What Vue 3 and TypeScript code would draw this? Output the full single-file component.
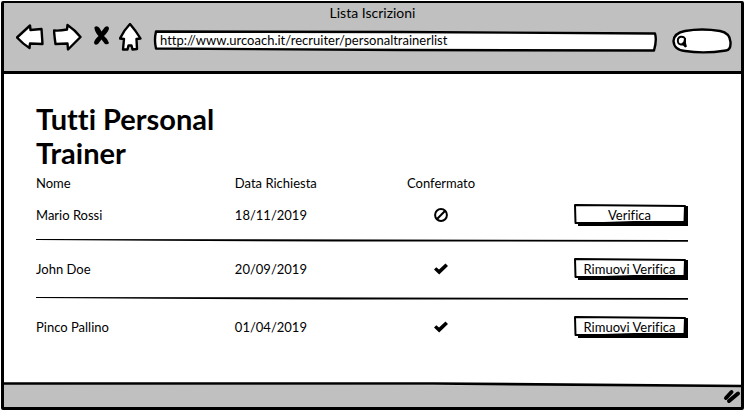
<script setup lang="ts">
import { ref } from 'vue'

interface Trainer {
  name: string
  date: string
  confirmed: boolean
}

const url = ref('http://www.urcoach.it/recruiter/personaltrainerlist')
const search = ref('')
const trainers = ref<Trainer[]>([
  { name: 'Mario Rossi', date: '18/11/2019', confirmed: false },
  { name: 'John Doe', date: '20/09/2019', confirmed: true },
  { name: 'Pinco Pallino', date: '01/04/2019', confirmed: true },
])

function toggle(trainer: Trainer) {
  trainer.confirmed = !trainer.confirmed
}
</script>

<template>
  <div class="window">
    <header class="chrome">
      <div class="title">Lista Iscrizioni</div>
      <div class="toolbar">
        <nav class="nav" aria-label="Browser">
          <button type="button" aria-label="Indietro">
            <svg width="28" height="28" viewBox="0 0 28 28" class="outline">
              <path d="M1 14.5 L14 2.5 L14.5 7 L25.500 6 L26.5 21 L14 20.5 L13.5 25 Q7 21 1 14.5 Z" />
            </svg>
          </button>
          <button type="button" aria-label="Avanti">
            <svg width="30" height="28" viewBox="0 0 30 28" class="outline">
              <path d="M1 7.5 Q7 8 14 6.5 L14.5 2 Q22 7 27.5 14 L15 26.5 L14.5 20.5 L2.5 21 Q1.5 14 1 7.5 Z" />
            </svg>
          </button>
          <button type="button" aria-label="Interrompi">
            <svg width="18" height="28" viewBox="0 0 18 28">
              <path d="M2.500 4 Q5 2 7.500 5 L9.500 8.500 L13 4 Q16 2 17 5 Q17 8 12 13 Q16 16 17 20 Q16 22 13 21 L9.500 16.500 L6 21 Q3 23 2 20 Q2 17 6.500 13 Q2 8 2.500 4 Z" />
            </svg>
          </button>
          <button type="button" aria-label="Pagina iniziale">
            <svg width="24" height="28" viewBox="0 0 24 28" class="outline">
              <path d="M11 1 Q17 8 21.500 15.500 L17.500 16 L18 26 L13.500 26.500 L12.500 22.500 L9.500 22.500 L8.500 26.500 L4 26.500 L5 16 L1 15.500 Q5 7 11 1 Z" />
            </svg>
          </button>
        </nav>
        <div class="address">
          <svg class="sketch" viewBox="0 0 506 22" preserveAspectRatio="none" aria-hidden="true">
            <path d="M3 1.500 L250 2 L503 3.500 Q505 10 502 20.500 L250 20 L3 18.500 Q1 10 3 1.500 Z" />
          </svg>
          <input v-model="url" type="text" aria-label="Indirizzo" />
        </div>
        <div class="search">
          <svg class="sketch" viewBox="0 0 60 26" preserveAspectRatio="none" aria-hidden="true">
            <path d="M13 3 Q30 0 48 3 Q58 5 58.500 14 Q59 22 54 22.500 Q32 26 13 23 Q2 22 1.500 13 Q2 5 13 3 Z" />
          </svg>
          <svg class="lens" width="12" height="14" viewBox="0 0 12 14" aria-hidden="true">
            <path d="M9 3 Q4 0 2 4 Q1 9 5 9.500 Q9 9 9 3 Q8.500 8 10 12 M6 8 L10 12" />
          </svg>
          <input v-model="search" type="text" aria-label="Cerca" />
        </div>
      </div>
    </header>

    <main class="page">
      <h1>Tutti Personal Trainer</h1>
      <table>
        <colgroup>
          <col class="col-name" />
          <col class="col-date" />
          <col class="col-state" />
          <col />
        </colgroup>
        <thead>
          <tr>
            <th scope="col">Nome</th>
            <th scope="col">Data Richiesta</th>
            <th scope="col" class="state">Confermato</th>
            <td></td>
          </tr>
        </thead>
        <tbody>
          <template v-for="(trainer, index) in trainers" :key="trainer.name">
            <tr v-if="index > 0" class="divider">
              <td colspan="4">
                <svg viewBox="0 0 652 4" preserveAspectRatio="none" aria-hidden="true">
                  <path d="M0 1 L652 2 L652 3.800 L300 3.400 L120 2.800 L0 2 Z" />
                </svg>
              </td>
            </tr>
            <tr class="trainer">
              <td>{{ trainer.name }}</td>
              <td>{{ trainer.date }}</td>
              <td class="state">
                <svg v-if="trainer.confirmed" width="14" height="12" viewBox="0 0 14 12" role="img" aria-label="Confermato">
                  <path d="M0 6.500 L2.300 4.200 L5 6.500 L11.500 0.500 L14 3 L5.200 11.600 Z" />
                </svg>
                <svg v-else class="banned" width="14" height="14" viewBox="0 0 14 14" role="img" aria-label="Non confermato">
                  <circle cx="7" cy="7" r="5.900" />
                  <path d="M2.800 11.200 L11.200 2.800" />
                </svg>
              </td>
              <td class="action">
                <button type="button" class="sketch-button" @click="toggle(trainer)">
                  <svg class="sketch" viewBox="0 0 114 22" preserveAspectRatio="none" aria-hidden="true">
                    <path class="shadow" d="M4 18 L110 17 L110 2 L114 2 L114 22 L4 22 Z" />
                    <path d="M1 1 L111 2 L110.500 18 L60 18 L30 19 L1.500 19 Z" />
                  </svg>
                  <span>{{ trainer.confirmed ? 'Rimuovi Verifica' : 'Verifica' }}</span>
                </button>
              </td>
            </tr>
          </template>
        </tbody>
      </table>
    </main>

    <footer class="status">
      <svg class="edge" viewBox="0 0 738 6" preserveAspectRatio="none" aria-hidden="true">
        <path class="fill" d="M0 2 L738 4 L738 6 L0 6 Z" />
        <path class="line" d="M0 1.500 L430 1.500 L738 4" />
      </svg>
      <svg class="grip" width="18" height="16" viewBox="0 0 18 16" aria-hidden="true">
        <path d="M3 10 L8.500 4 M6 13 L15 5.500" />
      </svg>
    </footer>
  </div>
</template>

<style>
body {
  margin: 0;
  background: #fff;
}
</style>

<style scoped>
.window {
  box-sizing: border-box;
  display: flex;
  flex-direction: column;
  min-height: calc(100vh - 2px);
  margin: 1px;
  border: 3px solid #000;
  border-top-width: 2px;
  border-radius: 2px;
  color: #000;
  font-family: Lato, "Liberation Sans", sans-serif;
  font-size: 13px;
  font-variant-ligatures: none;
  line-height: 20px;
}

button,
input {
  margin: 0;
  padding: 0;
  border: 0;
  background: none;
  color: inherit;
  font: inherit;
  font-variant-ligatures: none;
}

svg {
  display: block;
}

.chrome {
  padding-bottom: 12px;
  border-bottom: 3px solid #000;
  background: #c0c0c0;
}

.title {
  font-size: 14px;
  text-align: center;
}

.toolbar {
  display: flex;
  align-items: center;
  height: 36px;
  padding: 0 9px 0 12px;
}

.nav {
  display: flex;
  align-self: flex-start;
  gap: 9px;
}

.outline {
  fill: #fff;
  stroke: #000;
  stroke-width: 2.4;
  stroke-linejoin: round;
}

.sketch {
  position: absolute;
  inset: 0;
  width: 100%;
  height: 100%;
  fill: #fff;
  stroke: #000;
  stroke-width: 2;
  stroke-linejoin: round;
}

.address {
  position: relative;
  flex: 1;
  height: 22px;
  margin: 0 14px 0 10px;
}

.address .sketch {
  stroke-width: 2.4;
}

.address input,
.search input {
  position: relative;
  box-sizing: border-box;
  display: block;
  width: 100%;
  height: 100%;
}

.address input {
  padding: 0 7px 2px;
}

.search {
  position: relative;
  width: 60px;
  height: 26px;
}

.search .sketch {
  stroke-width: 2.4;
}

.search input {
  padding: 0 8px 0 18px;
}

.lens {
  position: absolute;
  top: 7px;
  left: 4px;
  fill: none;
  stroke: #000;
  stroke-width: 2;
}

.page {
  flex: 1;
  padding: 28px 53px 12px 32px;
}

h1 {
  max-width: 240px;
  margin: 0;
  font-size: 29px;
  font-weight: 700;
  line-height: 34px;
}

table {
  width: 100%;
  border-collapse: collapse;
  table-layout: fixed;
}

.col-name {
  width: 30.5%;
}

.col-date {
  width: 26.4%;
}

.col-state {
  width: 10.4%;
}

th,
td {
  height: 26px;
  padding: 0;
  font-weight: 400;
  text-align: left;
  vertical-align: middle;
}

.trainer td {
  height: 46px;
}

.trainer:first-child td {
  height: 38px;
}

.divider td {
  height: 12px;
}

.divider svg {
  width: 100%;
  height: 4px;
}

.trainer .state,
thead .state {
  text-align: center;
  white-space: nowrap;
}

.state svg {
  margin: 0 auto;
}

.banned {
  fill: none;
  stroke: #000;
  stroke-width: 2;
}

.sketch-button {
  position: relative;
  display: block;
  width: 114px;
  height: 22px;
  margin-left: auto;
  text-align: center;
}

.sketch-button span {
  position: relative;
  display: block;
  padding-right: 3px;
}

.sketch .shadow {
  fill: #000;
  stroke: none;
}

.status {
  display: flex;
  flex-direction: column;
  height: 25px;
  background: linear-gradient(#fff 4px, #c0c0c0 4px);
}

.edge {
  width: 100%;
  height: 6px;
}

.edge .fill {
  fill: #c0c0c0;
}

.edge .line {
  fill: none;
  stroke: #000;
  stroke-width: 2.6;
}

.grip {
  align-self: flex-end;
  fill: none;
  stroke: #000;
  stroke-width: 4;
  stroke-linecap: round;
}
</style>
